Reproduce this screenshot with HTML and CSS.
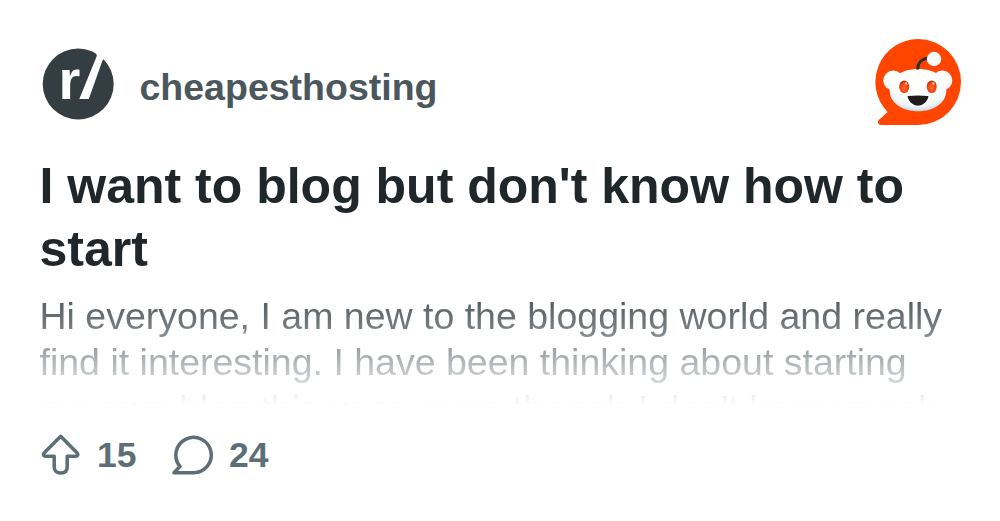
FILE: index.html
```html
<!DOCTYPE html>
<html lang="en">
<head>
    <meta charset="UTF-8">
    <meta name="viewport" content="width=device-width, initial-scale=1.0">
    <title>I want to blog but don't know how to start</title>
    <link rel="stylesheet" href="styles.css">
</head>
<body>
    <div class="card">
        <div class="header">
            <svg class="avatar" viewBox="0 0 72 72">
                <circle cx="36.200" cy="36" r="35.500" fill="#333d42"/>
                <text class="avatar-text" x="16.500" y="51">r</text>
                <path d="M51 0L66 11Q62 9.500 60.300 13L46.800 51H37.300L54.600 8.500Q55.500 5.500 51 3.500Z" fill="#fff"/>
            </svg>
            <span class="community">cheapesthosting</span>
            <svg class="logo" viewBox="0 0 88 88">
                <defs>
                    <radialGradient id="face" cx="0.5" cy="0.3" r="0.75">
                        <stop offset="0.5" stop-color="#fff"/>
                        <stop offset="0.8" stop-color="#eef3f7"/>
                        <stop offset="1" stop-color="#b5c6d2"/>
                    </radialGradient>
                    <radialGradient id="eye" cx="0.5" cy="0.6" r="0.6">
                        <stop offset="0" stop-color="#ff6533"/>
                        <stop offset="0.65" stop-color="#f4430c"/>
                        <stop offset="1" stop-color="#b42a05"/>
                    </radialGradient>
                </defs>
                <path d="M44 1a43 43 0 1 1 0 86H7c-2.700 0-4-3-2.200-4.900L13.600 74A43 43 0 0 1 44 1z" fill="#ff4500"/>
                <circle cx="19.300" cy="42.500" r="10" fill="url(#face)"/>
                <circle cx="68.300" cy="42.500" r="10" fill="url(#face)"/>
                <path d="M44 31c17 0 28.300 8.500 28.300 21.300S60 73.300 44 73.300 15.700 65 15.700 52.300 27 31 44 31z" fill="url(#face)"/>
                <path d="M43.700 31.500c0-6.500 4-11 11-11.500" fill="none" stroke="#342d2c" stroke-width="3"/>
                <circle cx="60" cy="21" r="7.200" fill="#f8fafc"/>
                <ellipse cx="30.200" cy="48.800" rx="5" ry="6.300" fill="url(#eye)"/>
                <ellipse cx="57.700" cy="48.800" rx="5" ry="6.300" fill="url(#eye)"/>
                <circle cx="32" cy="45.500" r="1.200" fill="#ffd0bd"/>
                <circle cx="59.300" cy="45.500" r="1.200" fill="#ffd0bd"/>
                <path d="M34.300 58Q44 57 53.700 58Q54.700 58.100 54.400 59C52.500 64.500 48.700 67.600 44 67.600S35.500 64.500 33.600 59Q33.300 58.100 34.300 58z" fill="#21191a"/>
            </svg>
        </div>
        <h1 class="title">I want to blog but don't know how to start</h1>
        <p class="excerpt">Hi everyone, I am new to the blogging world and really find it interesting. I have been thinking about starting my own blog this year, even though I don't know much</p>
        <div class="stats">
            <svg class="icon" viewBox="0 0 42 42">
                <path d="M20.700 2.300L36.700 18.500C38.700 20.600 37.900 22.300 35.500 22.300H27.200V33C27.200 37 24.500 39 20.700 39S14.200 37 14.200 33V22.300H5.900C3.300 22.300 2.700 20.500 4.600 18.500Z"/>
            </svg>
            <span class="count">15</span>
            <svg class="icon comment" viewBox="0 0 42 42">
                <path d="M3 38.700L9 32.400A17.700 17.700 0 1 1 21.500 38.700Z"/>
            </svg>
            <span class="count">24</span>
        </div>
    </div>
</body>
</html>
```
FILE: styles.css
```css
body {
    font-family: "Liberation Sans", Arial, sans-serif;
    background-color: #fff;
    margin: 0;
}
.card {
    box-sizing: border-box;
    width: 1000px;
    height: 521px;
    padding: 38px 38px 0 39.5px;
    overflow: hidden;
}
.header {
    display: flex;
    align-items: center;
    height: 88px;
    padding-left: 2.5px;
}
.avatar {
    width: 72px;
    height: 72px;
    margin-top: 4px;
}
.avatar-text {
    font-size: 56px;
    font-weight: bold;
    fill: #fff;
}
.community {
    margin: 10px auto 0 25.5px;
    font-size: 37.5px;
    font-weight: bold;
    color: #4a575d;
}
.logo {
    width: 88px;
    height: 88px;
}
.title {
    margin: 29px 0 0;
    font-size: 50px;
    line-height: 62.5px;
    color: #20272b;
}
.excerpt {
    height: 112px;
    margin: 13px 0 0;
    overflow: hidden;
    font-size: 37.5px;
    line-height: 46.3px;
    color: transparent;
    background: linear-gradient(#4c565b 0, #70777b 30px, #b3b8bb 70px, #d4d7d9 90px, #fff 112px);
    -webkit-background-clip: text;
    background-clip: text;
}
.stats {
    display: flex;
    align-items: center;
    margin-top: 28px;
    padding-left: 0.5px;
    color: #5c6f76;
}
.icon {
    width: 42px;
    height: 42px;
    fill: none;
    stroke: currentColor;
    stroke-width: 3.5;
    stroke-linejoin: round;
}
.comment {
    margin-left: 34px;
}
.count {
    margin: 2px 0 0 15px;
    font-size: 35.5px;
    font-weight: bold;
}
.comment + .count {
    margin-left: 16.5px;
}
```
